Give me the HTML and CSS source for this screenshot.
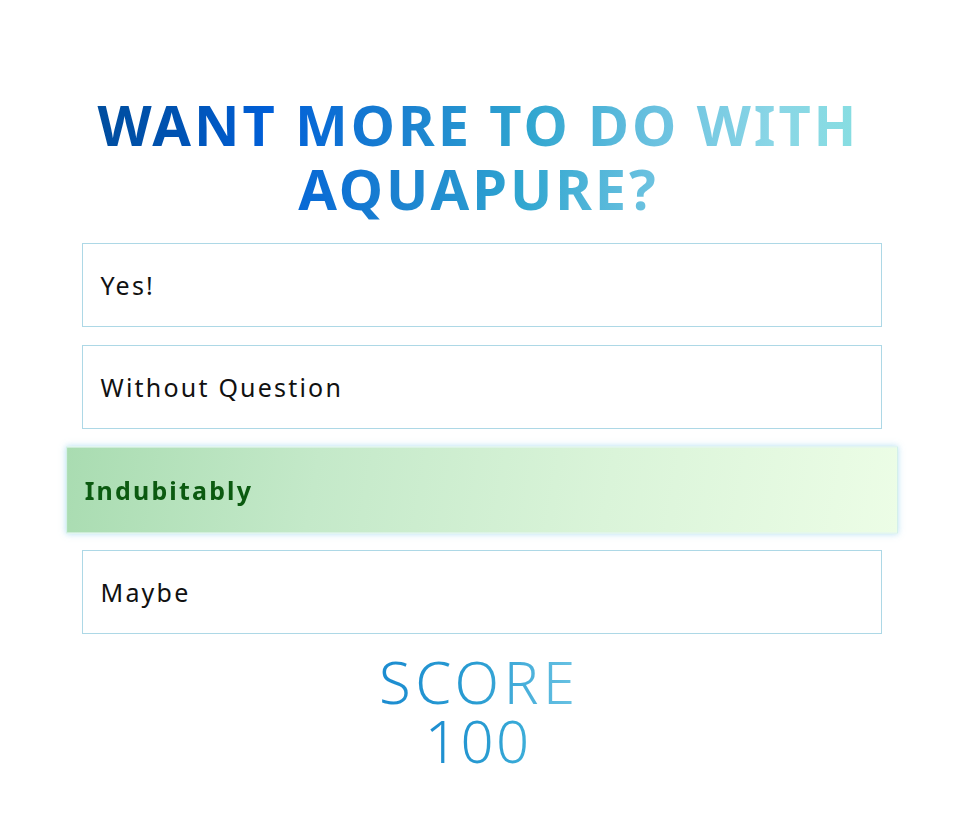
FILE: index.html
```html
<!DOCTYPE html>
<html lang="en">
<head>
<meta charset="utf-8">
<title>Quiz</title>
<link rel="stylesheet" href="styles.css">
</head>
<body>
<main class="quiz">
  <h1 class="question">WANT MORE TO DO WITH AQUAPURE?</h1>
  <ul class="options">
    <li class="option">Yes!</li>
    <li class="option">Without Question</li>
    <li class="option selected">Indubitably</li>
    <li class="option">Maybe</li>
  </ul>
  <div class="score">
    <span class="grad-score">SCORE</span>
    <span class="grad-score num">100</span>
  </div>
</main>
</body>
</html>
```

FILE: styles.css
```css
html, body {
  margin: 0;
  padding: 0;
  background: #ffffff;
}
body {
  font-family: "Noto Sans", "DejaVu Sans", sans-serif;
}
.quiz {
  width: 954px;
  display: flex;
  flex-direction: column;
  align-items: center;
  padding-top: 92px;
}
.question {
  margin: 0;
  width: 800px;
  text-align: center;
  font-size: 56px;
  line-height: 64px;
  font-weight: 700;
  letter-spacing: 2.9px;
  padding-left: 2.9px;
  box-sizing: border-box;
  background: linear-gradient(96deg, #004c99 0%, #0052b0 12%, #005fd8 24%, #1a80d0 40%, #30a6d0 56%, #6cc2e0 72%, #8ad6e6 86%, #86e0e0 100%);
  -webkit-background-clip: text;
  background-clip: text;
  color: transparent;
}
.options {
  list-style: none;
  margin: 23px 0 0 9px;
  padding: 0;
  width: 800px;
  display: flex;
  flex-direction: column;
  gap: 18px;
}
.option {
  box-sizing: border-box;
  height: 84px;
  border: 1px solid #add8e6;
  display: flex;
  align-items: center;
  padding-left: 18px;
  font-size: 25px;
  letter-spacing: 2.2px;
  color: #111;
  font-weight: 400;
}
.option.selected {
  margin: 1px 0 0;
  border-color: #d4f0ea;
  background: linear-gradient(100deg, #a9dcb1 0%, #c4e9c9 30%, #daf4d9 65%, #ecfde6 100%);
  transform: scale(1.04);
  box-shadow: 0 0 6px rgba(150, 210, 235, 0.7);
  color: #0b5a10;
  font-weight: 700;
  font-size: 24px;
  letter-spacing: 2.1px;
  padding-left: 17px;
}
.score {
  margin-top: 18px;
  display: flex;
  flex-direction: column;
  align-items: center;
  font-size: 58px;
  line-height: 59px;
  font-weight: 300;
}
.grad-score {
  display: block;
  letter-spacing: 4.5px;
  padding-left: 4.5px;
  background: linear-gradient(90deg, #1b8bd0 0%, #2a9dd2 50%, #6cc4e4 100%);
  -webkit-background-clip: text;
  background-clip: text;
  color: transparent;
}
.grad-score.num {
  letter-spacing: 2.5px;
  padding-left: 2.5px;
  background: linear-gradient(90deg, #1b8bd0 0%, #2a9dd2 60%, #3fb0da 100%);
  -webkit-background-clip: text;
  background-clip: text;
}
```
